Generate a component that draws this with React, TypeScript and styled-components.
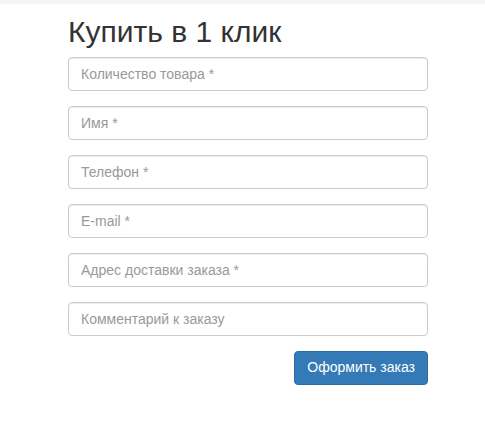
import React from 'react';
import styled, { createGlobalStyle } from 'styled-components';

const GlobalStyle = createGlobalStyle`
  body {
    margin: 0;
    background: #fff;
    font-family: "Liberation Sans", Arial, sans-serif;
    font-size: 14px;
    color: #333;
  }
  * {
    box-sizing: border-box;
  }
`;

const TopStrip = styled.div`
  height: 4px;
  background: #f5f5f5;
`;

const Wrapper = styled.div`
  width: 360px;
  margin-left: 68px;
`;

const Title = styled.h2`
  margin: 11px 0 9px;
  font-size: 30px;
  font-weight: 400;
  line-height: 1.1;
  color: #333;
`;

const StyledForm = styled.form`
  display: flex;
  flex-direction: column;
  gap: 15px;
`;

const StyledInput = styled.input`
  display: block;
  width: 100%;
  height: 34px;
  padding: 6px 12px;
  font-family: inherit;
  font-size: 14px;
  line-height: 1.42857;
  color: #555;
  background: #fff;
  border: 1px solid #ccc;
  border-radius: 4px;
  box-shadow: inset 0 1px 1px rgba(0, 0, 0, 0.075);
  outline: none;

  &::placeholder {
    color: #999;
  }
`;

const Actions = styled.div`
  display: flex;
  justify-content: flex-end;
`;

const StyledButton = styled.button`
  height: 34px;
  padding: 6px 12px;
  font-family: inherit;
  font-size: 14px;
  line-height: 1.42857;
  color: #fff;
  background: #337ab7;
  border: 1px solid #2e6da4;
  border-radius: 4px;
  cursor: pointer;
`;

const fields = [
  'Количество товара *',
  'Имя *',
  'Телефон *',
  'E-mail *',
  'Адрес доставки заказа *',
  'Комментарий к заказу',
];

const App = () => {
  return (
    <>
      <GlobalStyle />
      <TopStrip />
      <Wrapper>
        <Title>Купить в 1 клик</Title>
        <StyledForm onSubmit={(e) => e.preventDefault()}>
          {fields.map((placeholder) => (
            <StyledInput key={placeholder} placeholder={placeholder} />
          ))}
          <Actions>
            <StyledButton type="submit">Оформить заказ</StyledButton>
          </Actions>
        </StyledForm>
      </Wrapper>
    </>
  );
};

export default App;
